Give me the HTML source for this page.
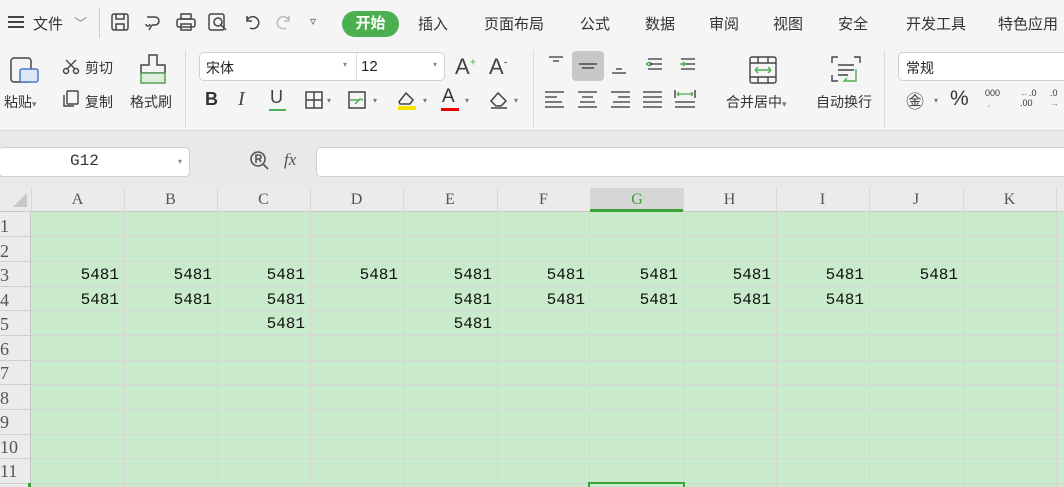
<!DOCTYPE html>
<html><head><meta charset="utf-8"><style>
*{margin:0;padding:0;box-sizing:border-box}
body{width:1064px;height:487px;overflow:hidden;background:#e9e9e9;font-family:"Liberation Sans","Noto Sans CJK SC",sans-serif;position:relative;color:#333}
.a{position:absolute;white-space:nowrap}
.top{position:absolute;left:0;top:0;width:1064px;height:131px;background:#f5f5f5;border-bottom:1px solid #dcdcdc}
.tab{font-size:15px;top:13px;color:#333}
.lab{font-size:14px;color:#333}
.hd{position:absolute;top:188px;height:24px;background:#ebebeb;border-bottom:1px solid #c8c8c8;font-family:"Liberation Serif","Noto Serif CJK SC",serif;font-size:16px;color:#555;text-align:center;line-height:24px}
.rh{position:absolute;left:0;width:31px;background:#ebebeb;border-right:1px solid #c8c8c8}
.n{position:absolute;font-family:"Liberation Mono",monospace;font-size:16px;color:#111;width:88px;text-align:right;line-height:24px}
.vl{position:absolute;top:212px;width:1px;height:275px;background:#d6d6d6}
.hl{position:absolute;left:31px;width:1033px;height:1px;background:#d6d6d6}
.cs{position:absolute;top:188px;width:1px;height:24px;background:#d8d8d8}
svg{position:absolute}
</style></head><body>
<div class="top"></div>
<div class="a" style="left:8px;top:16px;width:16px;height:2px;background:#444;box-shadow:0 5px 0 #444,0 10px 0 #444"></div>
<div class="a tab" style="left:33px">文件</div>
<div class="a" style="left:74px;top:13px;font-size:13px;color:#888">﹀</div>
<div class="a" style="left:99px;top:8px;width:1px;height:30px;background:#ccc"></div>
<svg style="left:110px;top:12px" width="20" height="20" viewBox="0 0 20 20" fill="none" stroke="#444" stroke-width="1.5"><rect x="2" y="2" width="16" height="16" rx="2"/><path d="M6 2v5h8V2M6 18v-6h8v6"/></svg>
<svg style="left:143px;top:12px" width="20" height="20" viewBox="0 0 20 20" fill="none" stroke="#444" stroke-width="1.5"><path d="M4 5h8a4 4 0 010 8H9M9 13l-3 5M3 12a2 2 0 104 0"/></svg>
<svg style="left:175px;top:12px" width="22" height="20" viewBox="0 0 22 20" fill="none" stroke="#444" stroke-width="1.5"><rect x="6" y="2" width="10" height="5"/><rect x="2" y="7" width="18" height="8" rx="2"/><rect x="6" y="12" width="10" height="6"/></svg>
<svg style="left:207px;top:12px" width="22" height="20" viewBox="0 0 22 20" fill="none" stroke="#444" stroke-width="1.5"><rect x="2" y="2" width="15" height="16" rx="2"/><circle cx="11" cy="10" r="4"/><path d="M14 13l5 5"/></svg>
<svg style="left:242px;top:12px" width="20" height="20" viewBox="0 0 20 20" fill="none" stroke="#444" stroke-width="1.5"><path d="M5 4v5h5M5 9a6 6 0 1 1 3 7"/></svg>
<svg style="left:274px;top:12px" width="20" height="20" viewBox="0 0 20 20" fill="none" stroke="#bbb" stroke-width="1.5"><path d="M15 4v5h-5M15 9a6 6 0 1 0-3 7"/></svg>
<div class="a" style="left:310px;top:14px;font-size:12px;color:#555">▿</div>
<div class="a" style="left:342px;top:11px;width:57px;height:26px;border-radius:13px;background:#4caf50;color:#fff;font-size:15px;line-height:26px;text-align:center;font-weight:bold">开始</div>
<div class="a tab" style="left:418px">插入</div>
<div class="a tab" style="left:484px">页面布局</div>
<div class="a tab" style="left:580px">公式</div>
<div class="a tab" style="left:645px">数据</div>
<div class="a tab" style="left:709px">审阅</div>
<div class="a tab" style="left:773px">视图</div>
<div class="a tab" style="left:838px">安全</div>
<div class="a tab" style="left:906px">开发工具</div>
<div class="a tab" style="left:998px">特色应用</div>
<svg style="left:8px;top:55px" width="32" height="32" viewBox="0 0 32 32" fill="none" stroke="#444" stroke-width="1.5"><rect x="3" y="3" width="20" height="24" rx="3"/><rect x="12" y="14" width="18" height="13" rx="2" fill="#dbe6f8" stroke="#4a78c8"/></svg>
<div class="a lab" style="left:4px;top:92px">粘贴<span style="font-size:9px;color:#777">▾</span></div>
<svg style="left:62px;top:58px" width="18" height="18" viewBox="0 0 18 18" fill="none" stroke="#444" stroke-width="1.4"><circle cx="4" cy="13" r="2.5"/><circle cx="14" cy="13" r="2.5"/><path d="M5 11L14 2M13 11L4 2"/></svg>
<div class="a lab" style="left:85px;top:58px">剪切</div>
<svg style="left:62px;top:90px" width="18" height="18" viewBox="0 0 18 18" fill="none" stroke="#444" stroke-width="1.4"><rect x="5" y="1" width="11" height="13" rx="1"/><path d="M2 5v11h10"/></svg>
<div class="a lab" style="left:85px;top:92px">复制</div>
<svg style="left:138px;top:53px" width="30" height="32" viewBox="0 0 30 32" fill="none" stroke="#444" stroke-width="1.5"><path d="M11 2h8v10h8v8H3v-8h8z"/><rect x="3" y="20" width="24" height="10" fill="#dcefdc" stroke="#5aa05a"/></svg>
<div class="a lab" style="left:130px;top:92px">格式刷</div>
<div class="a" style="left:185px;top:50px;width:1px;height:78px;background:#ddd"></div>
<div class="a" style="left:199px;top:52px;width:246px;height:29px;background:#fff;border:1px solid #d0d0d0;border-radius:5px"></div>
<div class="a" style="left:356px;top:53px;width:1px;height:27px;background:#ddd"></div>
<div class="a" style="left:206px;top:58px;font-size:14px;color:#222">宋体</div>
<div class="a" style="left:343px;top:60px;font-size:8px;color:#888">▾</div>
<div class="a" style="left:361px;top:58px;font-size:15px;color:#222">12</div>
<div class="a" style="left:433px;top:60px;font-size:8px;color:#888">▾</div>
<div class="a" style="left:455px;top:54px;font-size:22px;color:#444">A<sup style="font-size:11px;color:#4caf50">+</sup></div>
<div class="a" style="left:489px;top:54px;font-size:22px;color:#444">A<sup style="font-size:11px">-</sup></div>
<div class="a" style="left:205px;top:89px;font-size:18px;font-weight:bold;color:#333">B</div>
<div class="a" style="left:238px;top:88px;font-size:20px;font-style:italic;font-family:'Liberation Serif',serif;color:#444">I</div>
<div class="a" style="left:270px;top:87px;font-size:18px;color:#444">U</div>
<div class="a" style="left:269px;top:109px;width:17px;height:2px;background:#4caf50"></div>
<svg style="left:304px;top:90px" width="20" height="20" viewBox="0 0 20 20" fill="none" stroke="#444" stroke-width="1.5"><rect x="2" y="2" width="16" height="16"/><path d="M10 2v16M2 10h16"/></svg>
<div class="a" style="left:327px;top:96px;font-size:8px;color:#777">▾</div>
<svg style="left:347px;top:90px" width="22" height="20" viewBox="0 0 22 20" fill="none" stroke="#444" stroke-width="1.5"><rect x="2" y="2" width="16" height="16"/><path d="M2 10h10M8 14l5-5 3 1" stroke="#4caf50"/></svg>
<div class="a" style="left:373px;top:96px;font-size:8px;color:#777">▾</div>
<svg style="left:395px;top:88px" width="24" height="24" viewBox="0 0 24 24" fill="none" stroke="#444" stroke-width="1.5"><path d="M4 14l7-9 7 7-3 4H5z"/><rect x="3" y="18" width="18" height="4" fill="#f5e200" stroke="none"/></svg>
<div class="a" style="left:423px;top:96px;font-size:8px;color:#777">▾</div>
<div class="a" style="left:442px;top:86px;font-size:19px;color:#333">A</div>
<div class="a" style="left:441px;top:108px;width:18px;height:3px;background:#e00"></div>
<div class="a" style="left:465px;top:96px;font-size:8px;color:#777">▾</div>
<svg style="left:488px;top:90px" width="22" height="20" viewBox="0 0 22 20" fill="none" stroke="#444" stroke-width="1.5"><path d="M3 11l7-8 8 8-5 5H8zM3 18h16"/></svg>
<div class="a" style="left:514px;top:96px;font-size:8px;color:#777">▾</div>
<div class="a" style="left:533px;top:50px;width:1px;height:78px;background:#ddd"></div>
<div class="a" style="left:572px;top:51px;width:32px;height:30px;background:#c8c8c8;border-radius:4px"></div>
<svg style="left:540px;top:52px" width="170" height="62" viewBox="0 0 170 62" fill="none" stroke="#333" stroke-width="1.3">
<path d="M9 5h14M13 9h6M39 12h18M42 16h12M72 21h14M76 17h6"/>
<path d="M108 7h14M112 12h10M108 17h14M112 12l-3-2M112 12l-3 2" />
<path d="M141 7h14M145 12h10M141 17h14M141 12h5" />
<path d="M106 12l4-2M106 12l4 2" stroke="#4caf50"/><path d="M140 12h5l-2-2M145 12l-2 2" stroke="#4caf50"/>
<path d="M5 40h19M5 45h12M5 50h17M5 55h19"/>
<path d="M38 40h19M42 45h11M40 50h15M38 55h19"/>
<path d="M71 40h19M78 45h12M73 50h17M71 55h19"/>
<path d="M103 40h19M103 45h19M103 50h19M103 55h19"/>
<path d="M135 38v8M155 38v8M135 50h20M135 55h20"/><path d="M137 42h16M137 42l2-2M137 42l2 2M153 42l-2-2M153 42l-2 2" stroke="#4caf50"/>
</svg>
<svg style="left:748px;top:55px" width="30" height="30" viewBox="0 0 30 30" fill="none" stroke="#444" stroke-width="1.4"><rect x="2" y="2" width="26" height="26" rx="2"/><path d="M2 8h26M2 22h26M10 2v6M20 2v6M10 22v6M20 22v6"/><path d="M7 15h16M7 15l3-3M7 15l3 3M23 15l-3-3M23 15l-3 3" stroke="#4caf50"/></svg>
<div class="a lab" style="left:726px;top:92px">合并居中<span style="font-size:9px;color:#777">▾</span></div>
<svg style="left:830px;top:55px" width="32" height="30" viewBox="0 0 32 30" fill="none" stroke="#444" stroke-width="1.4"><path d="M2 8V2h6M24 2h6v6M2 20v6h6M8 10h16M8 15h16M8 20h10"/><path d="M26 14v12h-12l3-3" stroke="#4caf50"/></svg>
<div class="a lab" style="left:816px;top:92px">自动换行</div>
<div class="a" style="left:884px;top:50px;width:1px;height:78px;background:#ddd"></div>
<div class="a" style="left:898px;top:52px;width:170px;height:29px;background:#fff;border:1px solid #d0d0d0;border-radius:5px"></div>
<div class="a" style="left:906px;top:58px;font-size:14px;color:#222">常规</div>
<div class="a" style="left:906px;top:88px;font-size:18px;color:#444">㊎</div>
<div class="a" style="left:934px;top:96px;font-size:8px;color:#777">▾</div>
<div class="a" style="left:950px;top:87px;font-size:21px;color:#333">%</div>
<div class="a" style="left:985px;top:88px;font-size:9px;color:#333;line-height:10px">000<br><span style="color:#4caf50">&nbsp;,</span></div>
<div class="a" style="left:1020px;top:88px;font-size:9px;color:#333;line-height:10px"><span style="color:#4caf50">←</span>.0<br>.00</div>
<div class="a" style="left:1050px;top:88px;font-size:9px;color:#333;line-height:10px">.0<br><span style="color:#4caf50">→</span></div>
<div class="a" style="left:-2px;top:147px;width:192px;height:30px;background:#fff;border:1px solid #d0d0d0;border-radius:5px"></div>
<div class="a" style="left:70px;top:152px;font-size:16px;font-family:'Liberation Mono',monospace;color:#333">G12</div>
<div class="a" style="left:178px;top:157px;font-size:8px;color:#888">▾</div>
<svg style="left:249px;top:150px" width="22" height="22" viewBox="0 0 22 22" fill="none" stroke="#555" stroke-width="1.6"><circle cx="9" cy="9" r="7"/><path d="M14 14l5 5M7 13V5h3a2 2 0 010 4H7M10 9l2 3"/></svg>
<div class="a" style="left:284px;top:150px;font-size:17px;font-style:italic;font-family:'Liberation Serif',serif;color:#555">fx</div>
<div class="a" style="left:316px;top:147px;width:760px;height:30px;background:#fff;border:1px solid #d0d0d0;border-radius:5px"></div>
<div class="hd" style="left:0;width:1064px"></div>
<svg style="left:12px;top:192px" width="16" height="16"><path d="M15 1V15H1z" fill="#c8c8c8"/></svg>
<div class="hd" style="left:590px;width:94px;background:#d6d6d6;border-bottom:3px solid #3aa33a;color:#3aa33a">G</div>
<div class="hd" style="left:31px;width:93px;background:none;border:0">A</div>
<div class="hd" style="left:124px;width:93px;background:none;border:0">B</div>
<div class="hd" style="left:217px;width:93px;background:none;border:0">C</div>
<div class="hd" style="left:310px;width:93px;background:none;border:0">D</div>
<div class="hd" style="left:403px;width:94px;background:none;border:0">E</div>
<div class="hd" style="left:497px;width:93px;background:none;border:0">F</div>
<div class="hd" style="left:683px;width:93px;background:none;border:0">H</div>
<div class="hd" style="left:776px;width:93px;background:none;border:0">I</div>
<div class="hd" style="left:869px;width:94px;background:none;border:0">J</div>
<div class="hd" style="left:963px;width:93px;background:none;border:0">K</div>
<div class="cs" style="left:31px"></div><div class="cs" style="left:124px"></div><div class="cs" style="left:217px"></div><div class="cs" style="left:310px"></div><div class="cs" style="left:403px"></div><div class="cs" style="left:497px"></div><div class="cs" style="left:683px"></div><div class="cs" style="left:776px"></div><div class="cs" style="left:869px"></div><div class="cs" style="left:963px"></div><div class="cs" style="left:1056px"></div>
<div class="a" style="left:31px;top:212px;width:1033px;height:275px;background:#c9ebcb"></div>
<div class="vl" style="left:124px"></div><div class="vl" style="left:217px"></div><div class="vl" style="left:310px"></div><div class="vl" style="left:403px"></div><div class="vl" style="left:497px"></div><div class="vl" style="left:589px"></div><div class="vl" style="left:683px"></div><div class="vl" style="left:776px"></div><div class="vl" style="left:869px"></div><div class="vl" style="left:963px"></div><div class="vl" style="left:1056px"></div>
<div class="hl" style="top:236px"></div><div class="hl" style="top:261px"></div><div class="hl" style="top:286px"></div><div class="hl" style="top:310px"></div><div class="hl" style="top:335px"></div><div class="hl" style="top:360px"></div><div class="hl" style="top:384px"></div><div class="hl" style="top:409px"></div><div class="hl" style="top:434px"></div><div class="hl" style="top:458px"></div><div class="hl" style="top:483px"></div>
<div class="rh" style="top:212px;height:275px"></div>
<div class="a" style="left:0;top:214px;font-family:'Liberation Serif',serif;font-size:18px;color:#555;line-height:24.55px">1<br>2<br>3<br>4<br>5<br>6<br>7<br>8<br>9<br>10<br>11</div>
<div class="a" style="left:0;top:236px;width:30px;height:1px;background:#cfcfcf;box-shadow:0 25px 0 #cfcfcf,0 50px 0 #cfcfcf,0 74px 0 #cfcfcf,0 99px 0 #cfcfcf,0 124px 0 #cfcfcf,0 148px 0 #cfcfcf,0 173px 0 #cfcfcf,0 198px 0 #cfcfcf,0 222px 0 #cfcfcf,0 247px 0 #cfcfcf"></div>
<div class="a" style="left:28px;top:483px;width:3px;height:4px;background:#3aa33a"></div>
<div class="a" style="left:588px;top:482px;width:97px;height:5px;border:2px solid #3aa33a;border-bottom:0"></div>
<div class="n" style="left:31px;top:263px">5481</div><div class="n" style="left:124px;top:263px">5481</div><div class="n" style="left:217px;top:263px">5481</div><div class="n" style="left:310px;top:263px">5481</div><div class="n" style="left:404px;top:263px">5481</div><div class="n" style="left:497px;top:263px">5481</div><div class="n" style="left:590px;top:263px">5481</div><div class="n" style="left:683px;top:263px">5481</div><div class="n" style="left:776px;top:263px">5481</div><div class="n" style="left:870px;top:263px">5481</div>
<div class="n" style="left:31px;top:288px">5481</div><div class="n" style="left:124px;top:288px">5481</div><div class="n" style="left:217px;top:288px">5481</div><div class="n" style="left:404px;top:288px">5481</div><div class="n" style="left:497px;top:288px">5481</div><div class="n" style="left:590px;top:288px">5481</div><div class="n" style="left:683px;top:288px">5481</div><div class="n" style="left:776px;top:288px">5481</div>
<div class="n" style="left:217px;top:312px">5481</div><div class="n" style="left:404px;top:312px">5481</div>
</body></html>
